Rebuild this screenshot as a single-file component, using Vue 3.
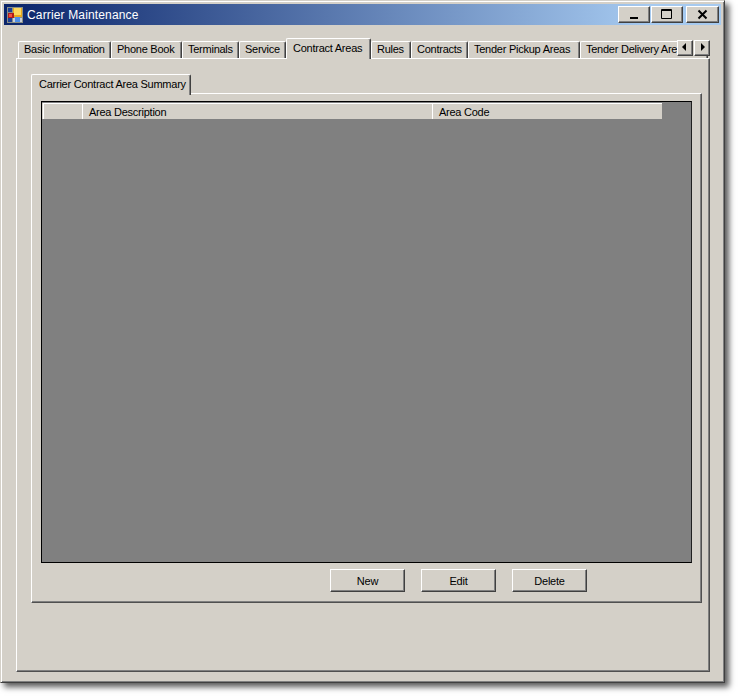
<script setup>
const tabs = [
  { label: 'Basic Information', width: 93 },
  { label: 'Phone Book', width: 71 },
  { label: 'Terminals', width: 57 },
  { label: 'Service', width: 47 },
  { label: 'Contract Areas', width: 85, active: true },
  { label: 'Rules', width: 40 },
  { label: 'Contracts', width: 57 },
  { label: 'Tender Pickup Areas', width: 112 },
  { label: 'Tender Delivery Areas', width: 128 }
]
const buttons = ['New', 'Edit', 'Delete']
</script>

<template>
  <div class="page">
    <div class="window">
      <header class="titlebar">
        <svg class="app-icon" width="16" height="16" viewBox="0 0 16 16" aria-hidden="true">
          <rect x="0" y="0" width="16" height="16" fill="#8a8f86" />
          <rect x="1" y="1" width="4" height="4" fill="#1c3f94" />
          <rect x="1" y="11" width="4" height="4" fill="#1c3f94" />
          <rect x="6" y="11" width="9" height="4" fill="#c8cfd8" />
          <rect x="6" y="1" width="9" height="9" fill="#e8a91c" />
          <rect x="7" y="1" width="7" height="7" fill="#fbd860" />
          <rect x="1" y="6" width="6" height="5" fill="#b01c1c" />
          <rect x="2" y="7" width="3" height="3" fill="#f05040" />
          <rect x="8" y="10" width="5" height="5" fill="#4f8fe8" />
        </svg>
        <span class="title">Carrier Maintenance</span>
        <div class="controls">
          <button class="ctl" aria-label="Minimize">
            <svg width="32" height="17" viewBox="0 0 32 17"><rect x="12" y="11" width="8" height="2" fill="#000" /></svg>
          </button>
          <button class="ctl" aria-label="Maximize">
            <svg width="32" height="17" viewBox="0 0 32 17"><path d="M10.5 3.5h10v9h-10z M10.5 4.5h10" fill="none" stroke="#000" /></svg>
          </button>
          <button class="ctl close" aria-label="Close">
            <svg width="33" height="17" viewBox="0 0 33 17"><path d="M12.5 4.5l8 8M20.5 4.5l-8 8" fill="none" stroke="#000" stroke-width="2" /></svg>
          </button>
        </div>
      </header>

      <section class="tabcontrol">
        <div class="tabstrip">
          <div
            v-for="tab in tabs"
            :key="tab.label"
            class="tab"
            :class="{ active: tab.active }"
            :style="{ width: tab.width + 'px' }"
          >{{ tab.label }}</div>
          <div class="scrollers">
            <button class="scroll" aria-label="Previous">
              <svg width="16" height="16" viewBox="0 0 16 16"><path d="M9 3v8L5 7z" fill="#000" /></svg>
            </button>
            <button class="scroll" aria-label="Next">
              <svg width="16" height="16" viewBox="0 0 16 16"><path d="M7 3v8l4-4z" fill="#000" /></svg>
            </button>
          </div>
        </div>

        <div class="outer-panel">
          <div class="subtab">Carrier Contract Area Summary</div>
          <div class="inner-panel">
            <div class="grid">
              <div class="grid-header">
                <div class="cell corner"></div>
                <div class="cell desc">Area Description</div>
                <div class="cell code">Area Code</div>
              </div>
            </div>
            <div class="actions">
              <button v-for="b in buttons" :key="b" class="btn">{{ b }}</button>
            </div>
          </div>
        </div>
      </section>
    </div>
  </div>
</template>

<style>
html, body { margin: 0; background: #fff; }
</style>

<style scoped>
.page {
  width: 740px;
  height: 698px;
  background: #fff;
  overflow: hidden;
}
.window {
  box-sizing: border-box;
  width: 725px;
  height: 683px;
  padding: 3px;
  display: flex;
  flex-direction: column;
  background: #d4d0c8;
  border: 1px solid;
  border-color: #d4d0c8 #404040 #404040 #d4d0c8;
  box-shadow: inset 1px 1px 0 #fff, inset -1px -1px 0 #808080, 4px 4px 6px rgba(0, 0, 0, 0.65);
  font-family: "Liberation Sans", Arial, sans-serif;
  font-size: 11px;
  letter-spacing: -0.25px;
  color: #000;
}
.titlebar {
  height: 21px;
  flex: none;
  display: flex;
  align-items: center;
  padding-left: 3px;
  padding-right: 2px;
  background: linear-gradient(90deg, #0a246a, #a6caf0 90%);
}
.app-icon { flex: none; }
.title {
  margin-left: 4px;
  color: #fff;
  font-size: 12px;
  letter-spacing: 0.15px;
}
.controls { margin-left: auto; display: flex; gap: 1px; }
.ctl, .scroll, .btn {
  box-sizing: border-box;
  padding: 0;
  margin: 0;
  background: #d4d0c8;
  border: 1px solid;
  border-color: #fff #404040 #404040 #fff;
  box-shadow: inset -1px -1px 0 #808080;
  font: inherit;
  letter-spacing: inherit;
  color: #000;
  display: block;
}
.ctl { width: 32px; height: 17px; position: relative; }
.ctl svg { position: absolute; left: -1px; top: -1px; }
.ctl.close { margin-left: 2px; width: 33px; }

.tabcontrol {
  margin: 13px 11px 0 12px;
  flex: none;
  width: 694px;
}
.tabstrip {
  position: relative;
  z-index: 1;
  height: 21px;
  margin-bottom: -1px;
  display: flex;
  align-items: flex-start;
  overflow: hidden;
  padding-left: 2px;
}
.tab {
  box-sizing: border-box;
  flex: none;
  height: 17px;
  margin-top: 3px;
  line-height: 15px;
  padding-left: 5px;
  white-space: nowrap;
  overflow: hidden;
  border-top: 1px solid #fff;
  border-left: 1px solid #fff;
  border-right: 1px solid #404040;
  box-shadow: inset -1px 0 0 #808080;
  border-top-left-radius: 2px;
  border-top-right-radius: 2px;
}
.tab.active {
  height: 21px;
  margin-top: 0;
  line-height: 18px;
  padding-left: 6px;
  position: relative;
  z-index: 1;
  background: #d4d0c8;
}
.scrollers {
  position: absolute;
  right: 0;
  top: 2px;
  display: flex;
  gap: 1px;
  z-index: 2;
  background: #d4d0c8;
}
.scroll { width: 16px; height: 16px; position: relative; }
.scroll svg { position: absolute; left: -1px; top: -1px; }

.outer-panel {
  box-sizing: border-box;
  height: 614px;
  padding: 15px 7px 0 14px;
  border: 1px solid;
  border-color: #fff #505050 #505050 #fff;
  box-shadow: inset -1px -1px 0 #808080;
}
.subtab {
  box-sizing: border-box;
  width: 160px;
  height: 21px;
  line-height: 19px;
  padding-left: 7px;
  white-space: nowrap;
  border-top: 1px solid #fff;
  border-left: 1px solid #fff;
  border-right: 1px solid #404040;
  box-shadow: inset -1px 0 0 #808080;
  border-top-left-radius: 2px;
  border-top-right-radius: 2px;
  margin-bottom: -2px;
  position: relative;
  z-index: 1;
  background: #d4d0c8;
}
.inner-panel {
  box-sizing: border-box;
  height: 510px;
  padding: 7px 9px 0 9px;
  border: 1px solid;
  border-color: #fff #505050 #505050 #fff;
  box-shadow: inset -1px -1px 0 #808080;
}
.grid {
  box-sizing: border-box;
  height: 462px;
  background: #808080;
  border: 1px solid;
  border-color: #000 #202020 #000 #000;
  padding-top: 1px;
}
.grid-header {
  display: flex;
  height: 16px;
  width: 620px;
  background: #d4d0c8;
}
.cell {
  box-sizing: border-box;
  height: 16px;
  line-height: 16px;
  border-top: 1px solid #fff;
  border-left: 1px solid #fff;
  white-space: nowrap;
}
.corner { width: 39px; margin-left: 1px; }
.desc { width: 350px; padding-left: 6px; }
.code { width: 230px; padding-left: 6px; }

.actions {
  display: flex;
  gap: 16px;
  justify-content: flex-end;
  padding-right: 105px;
  margin-top: 6px;
}
.btn { width: 75px; height: 23px; text-align: center; }
</style>
